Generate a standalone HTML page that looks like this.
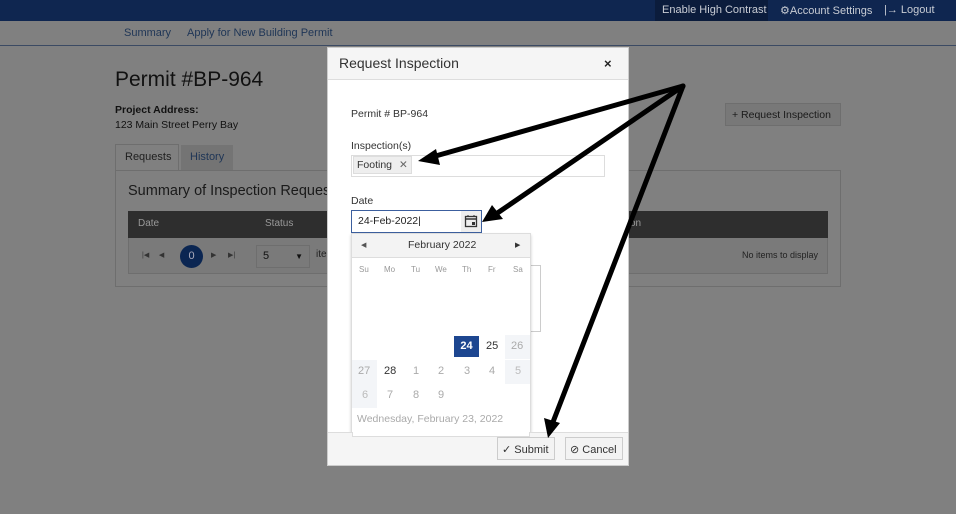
<!DOCTYPE html>
<html><head><meta charset="utf-8"><style>
*{box-sizing:border-box;margin:0;padding:0}
html,body{background:#808080}
body{width:956px;height:514px;overflow:hidden;font-family:"Liberation Sans",Arial,sans-serif;position:relative;color:#222}
.a{position:absolute;white-space:nowrap}
</style></head><body>
<div class="a" style="left:0;top:0;width:956px;height:21px;background:#0f2650"></div>
<div class="a" style="left:655px;top:0;width:113px;height:21px;background:#0b1c3c"></div>
<div class="a" style="left:662px;top:4px;font-size:11px;color:#c8ccd4">Enable High Contrast</div>
<div class="a" style="left:780px;top:4px;font-size:11px;color:#c8ccd4">⚙Account Settings</div>
<div class="a" style="left:884px;top:4px;font-size:11px;color:#c8ccd4">|→ Logout</div>
<div class="a" style="left:0;top:45px;width:956px;height:1px;background:#3b4a63"></div>
<div class="a" style="left:124px;top:27px;font-size:11px;color:#1e3556">Summary</div>
<div class="a" style="left:187px;top:27px;font-size:11px;color:#1e3556">Apply for New Building Permit</div>
<div class="a" style="left:115px;top:68px;font-size:21px;color:#111">Permit #BP-964</div>
<div class="a" style="left:115px;top:104px;font-size:10.5px;font-weight:bold;color:#111">Project Address:</div>
<div class="a" style="left:115px;top:119px;font-size:10.5px;color:#111">123 Main Street Perry Bay</div>
<div class="a" style="left:115px;top:144px;width:64px;height:27px;border:1px solid #6e6e6e;border-bottom:none;background:#808080;font-size:11px;color:#1e1e1e;padding:6px 9px">Requests</div>
<div class="a" style="left:181px;top:145px;width:52px;height:25px;background:#747474;font-size:11px;color:#1e3556;padding:6px 9px">History</div>
<div class="a" style="left:115px;top:170px;width:726px;height:117px;border:1px solid #6e6e6e"></div>
<div class="a" style="left:128px;top:183px;font-size:14.5px;color:#1a1a1a">Summary of Inspection Reques</div>
<div class="a" style="left:128px;top:211px;width:700px;height:27px;background:#2e2e2e"></div>
<div class="a" style="left:138px;top:218px;font-size:10px;color:#999">Date</div>
<div class="a" style="left:265px;top:218px;font-size:10px;color:#999">Status</div>
<div class="a" style="left:630px;top:218px;font-size:10px;color:#999">on</div>
<div class="a" style="left:128px;top:238px;width:700px;height:36px;border:1px solid #6e6e6e;border-top:none;background:#7a7a7a"></div>
<div class="a" style="left:180px;top:245px;width:23px;height:23px;border-radius:50%;background:#0b2652;color:#aab;font-size:11px;text-align:center;line-height:23px">0</div>
<div class="a" style="left:142px;top:251px;font-size:7px;color:#333">|◀&nbsp;&nbsp;&nbsp;&nbsp;&nbsp;◀</div>
<div class="a" style="left:211px;top:251px;font-size:7px;color:#333">▶&nbsp;&nbsp;&nbsp;&nbsp;&nbsp;&nbsp;▶|</div>
<div class="a" style="left:256px;top:245px;width:54px;height:23px;border:1px solid #6e6e6e;font-size:11px;padding:4px 6px;color:#111">5<span style="position:absolute;right:6px;font-size:8px;top:6px">▼</span></div>
<div class="a" style="left:316px;top:249px;font-size:10px;color:#222">ite</div>
<div class="a" style="left:742px;top:250px;font-size:9px;color:#222">No items to display</div>
<div class="a" style="left:725px;top:103px;width:116px;height:23px;border:1px solid #6e6e6e;background:#787878;font-size:10.5px;color:#1a1a1a;padding:5px 6px">+ Request Inspection</div>

<div class="a" style="left:327px;top:47px;width:302px;height:419px;background:#fff;border:1px solid #ccc"></div>
<div class="a" style="left:328px;top:48px;width:300px;height:32px;background:#f5f5f5;border-bottom:1px solid #ddd"></div>
<div class="a" style="left:339px;top:55px;font-size:14px;color:#333">Request Inspection</div>
<div class="a" style="left:604px;top:56px;font-size:13px;color:#222;font-weight:bold">×</div>
<div class="a" style="left:351px;top:108px;font-size:10.5px;color:#333">Permit # BP-964</div>
<div class="a" style="left:351px;top:140px;font-size:10.5px;color:#333">Inspection(s)</div>
<div class="a" style="left:351px;top:155px;width:254px;height:22px;border:1px solid #ddd"></div>
<div class="a" style="left:353px;top:156px;width:59px;height:18px;background:#eee;border:1px solid #ddd;font-size:10.5px;color:#333;padding:2px 3px">Footing <span style="margin-left:4px;color:#666">✕</span></div>
<div class="a" style="left:351px;top:195px;font-size:10.5px;color:#333">Date</div>
<div class="a" style="left:351px;top:210px;width:131px;height:23px;border:1px solid #3c5f9e"></div>
<div class="a" style="left:358px;top:215px;font-size:10.5px;color:#222">24-Feb-2022|</div>
<div class="a" style="left:461px;top:211px;width:20px;height:21px;background:#eee"></div>
<svg class="a" style="left:464px;top:214px" width="14" height="14"><rect x="1.5" y="2.5" width="11" height="10" fill="none" stroke="#333" stroke-width="1.3"/><line x1="1.5" y1="5" x2="12.5" y2="5" stroke="#333" stroke-width="1.5"/><rect x="8" y="8" width="3" height="3" fill="#333"/><line x1="4" y1="1" x2="4" y2="3" stroke="#333"/><line x1="10" y1="1" x2="10" y2="3" stroke="#333"/></svg>
<div class="a" style="left:351px;top:265px;width:190px;height:67px;border:1px solid #ccc"></div>
<div class="a" style="left:351px;top:233px;width:180px;height:204px;background:#fff;border:1px solid #ddd;box-shadow:0 2px 3px rgba(0,0,0,.2)"></div>
<div class="a" style="left:352px;top:234px;width:178px;height:24px;background:#f3f3f3;border-bottom:1px solid #ddd"></div>
<div class="a" style="left:361px;top:241px;font-size:7px;color:#555">◀</div>
<div class="a" style="left:515px;top:241px;font-size:7px;color:#333">▶</div>
<div class="a" style="left:408px;top:239px;font-size:10.5px;color:#333">February 2022</div>
<div class="a" style="left:359px;top:265px;font-size:8px;color:#999">Su</div>
<div class="a" style="left:384px;top:265px;font-size:8px;color:#999">Mo</div>
<div class="a" style="left:411px;top:265px;font-size:8px;color:#999">Tu</div>
<div class="a" style="left:435px;top:265px;font-size:8px;color:#999">We</div>
<div class="a" style="left:462px;top:265px;font-size:8px;color:#999">Th</div>
<div class="a" style="left:488px;top:265px;font-size:8px;color:#999">Fr</div>
<div class="a" style="left:513px;top:265px;font-size:8px;color:#999">Sa</div>
<div class="a" style="left:454px;top:336px;width:25px;height:21px;background:#1d4690;color:#fff;font-size:11px;font-weight:bold;text-align:center;line-height:21px">24</div>
<div class="a" style="left:505px;top:335px;width:25px;height:24px;background:#f3f5f8"></div>
<div class="a" style="left:352px;top:360px;width:25px;height:24px;background:#f3f5f8"></div>
<div class="a" style="left:505px;top:360px;width:25px;height:24px;background:#f3f5f8"></div>
<div class="a" style="left:352px;top:384px;width:25px;height:24px;background:#f3f5f8"></div>
<div class="a" style="left:486px;top:340px;font-size:11px;color:#333">25</div>
<div class="a" style="left:511px;top:340px;font-size:11px;color:#aaa">26</div>
<div class="a" style="left:358px;top:365px;font-size:11px;color:#aaa">27</div>
<div class="a" style="left:384px;top:365px;font-size:11px;color:#333">28</div>
<div class="a" style="left:413px;top:365px;font-size:11px;color:#aaa">1</div>
<div class="a" style="left:438px;top:365px;font-size:11px;color:#aaa">2</div>
<div class="a" style="left:464px;top:365px;font-size:11px;color:#aaa">3</div>
<div class="a" style="left:489px;top:365px;font-size:11px;color:#aaa">4</div>
<div class="a" style="left:515px;top:365px;font-size:11px;color:#bbb">5</div>
<div class="a" style="left:362px;top:389px;font-size:11px;color:#bbb">6</div>
<div class="a" style="left:387px;top:389px;font-size:11px;color:#aaa">7</div>
<div class="a" style="left:413px;top:389px;font-size:11px;color:#aaa">8</div>
<div class="a" style="left:438px;top:389px;font-size:11px;color:#aaa">9</div>
<div class="a" style="left:357px;top:413px;font-size:10.5px;color:#aaa">Wednesday, February 23, 2022</div>
<div class="a" style="left:328px;top:432px;width:300px;height:33px;background:#f5f5f5;border-top:1px solid #ddd"></div>
<div class="a" style="left:352px;top:432px;width:178px;height:5px;background:#fff;border-left:1px solid #ddd;border-right:1px solid #ddd;border-bottom:1px solid #ddd"></div>
<div class="a" style="left:497px;top:437px;width:58px;height:23px;border:1px solid #ccc;background:#f3f3f3;font-size:11px;color:#333;padding:5px 4px">✓ Submit</div>
<div class="a" style="left:565px;top:437px;width:58px;height:23px;border:1px solid #ccc;background:#f3f3f3;font-size:11px;color:#333;padding:5px 4px">⊘ Cancel</div>

<svg class="a" style="left:0;top:0" width="956" height="514">
<g stroke="#000" stroke-width="5" stroke-linecap="round" fill="none">
<line x1="683" y1="86" x2="432" y2="157"/>
<line x1="683" y1="86" x2="496" y2="214"/>
<line x1="683" y1="86" x2="553" y2="422"/>
</g>
<g fill="#000">
<polygon points="418,161 436,149 440,165"/>
<polygon points="482,222 492,205 503,219"/>
<polygon points="548,438 544,418 560,423"/>
</g>
</svg>
</body></html>
